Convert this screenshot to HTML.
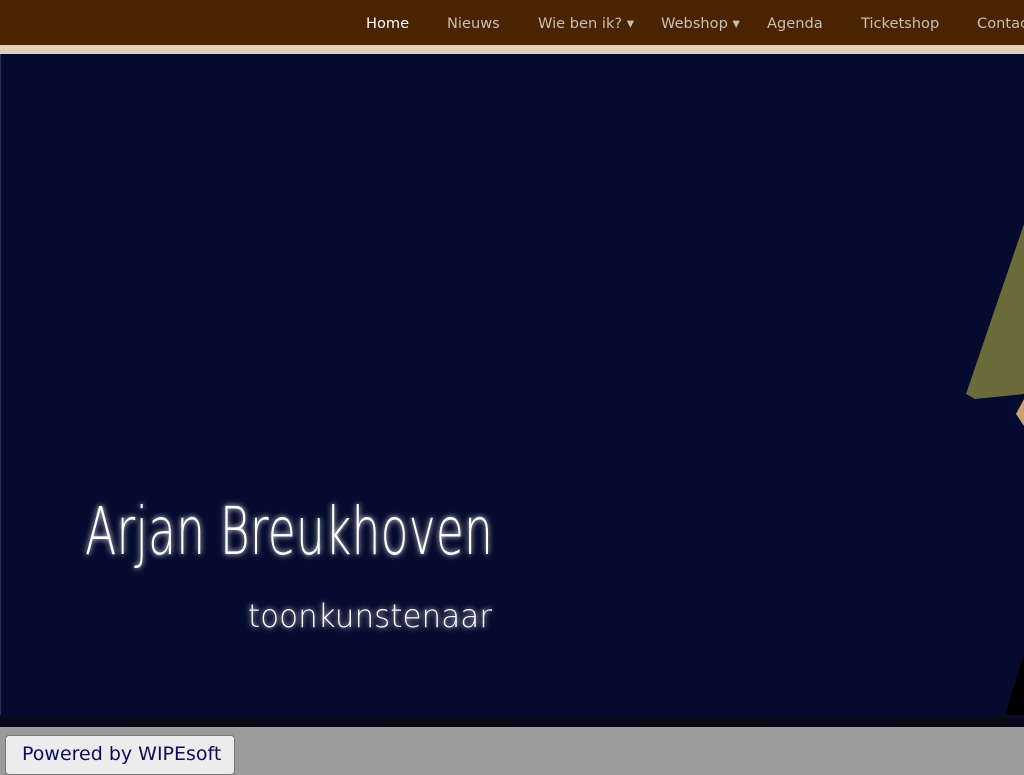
<!DOCTYPE html>
<html><head><meta charset="utf-8"><style>
html,body{margin:0;padding:0;width:1024px;height:768px;overflow:hidden;background:#9b9b9b;font-family:"DejaVu Sans","Liberation Sans",sans-serif}
.nav{position:absolute;left:0;top:0;width:1024px;height:45px;background:#4a2300}
.nav span{position:absolute;top:15px;font-size:14.6px;color:#c9bfb3;white-space:nowrap}
.strip{position:absolute;left:0;top:45px;width:1024px;height:9px;background:#e3cfb8}
.hero{position:absolute;left:0;top:54px;width:1024px;height:661px;background:#050b2e;border-left:1px solid #2a3050;box-sizing:border-box}
.dark{position:absolute;left:0;top:715px;width:1024px;height:12px;background:linear-gradient(#0a0d22,#050610)}
.btn{position:absolute;left:5px;top:735px;width:230px;height:40px;background:#ececec;border:1px solid #777;border-radius:4px;box-sizing:border-box;font-size:19px;color:#0c0c5a;padding:7px 0 0 16px}
</style></head><body>
<div class="nav">
<span style="left:366px;color:#fff">Home</span>
<span style="left:447px">Nieuws</span>
<span style="left:538px">Wie ben ik? ▾</span>
<span style="left:661px">Webshop ▾</span>
<span style="left:767px">Agenda</span>
<span style="left:861px">Ticketshop</span>
<span style="left:977px">Contact</span>
</div>
<div class="strip"></div>
<div class="hero">
<svg width="1024" height="661" style="position:absolute;left:-1px;top:0">
<defs><filter id="g"><feGaussianBlur stdDeviation="3" result="b"/><feMerge><feMergeNode in="b"/><feMergeNode in="SourceGraphic"/></feMerge></filter></defs>
<polygon points="1024,170 966,340 975,345 1024,340" fill="#6b6a3a"/>
<polygon points="1024,345 1016,360 1024,372" fill="#c9a070"/>
<polygon points="1024,600 1005,661 1024,661" fill="#000"/>
<g filter="url(#g)" fill="#fff" font-family="DejaVu Sans ExtraLight,DejaVu Sans,sans-serif" font-weight="200">
<text x="85" y="500" font-size="66" textLength="408" lengthAdjust="spacingAndGlyphs">Arjan Breukhoven</text>
<text x="248" y="573" font-size="32" textLength="244" lengthAdjust="spacingAndGlyphs">toonkunstenaar</text>
</g>
</svg>
</div>
<div class="dark"></div>
<div class="btn">Powered by WIPEsoft</div>
</body></html>
